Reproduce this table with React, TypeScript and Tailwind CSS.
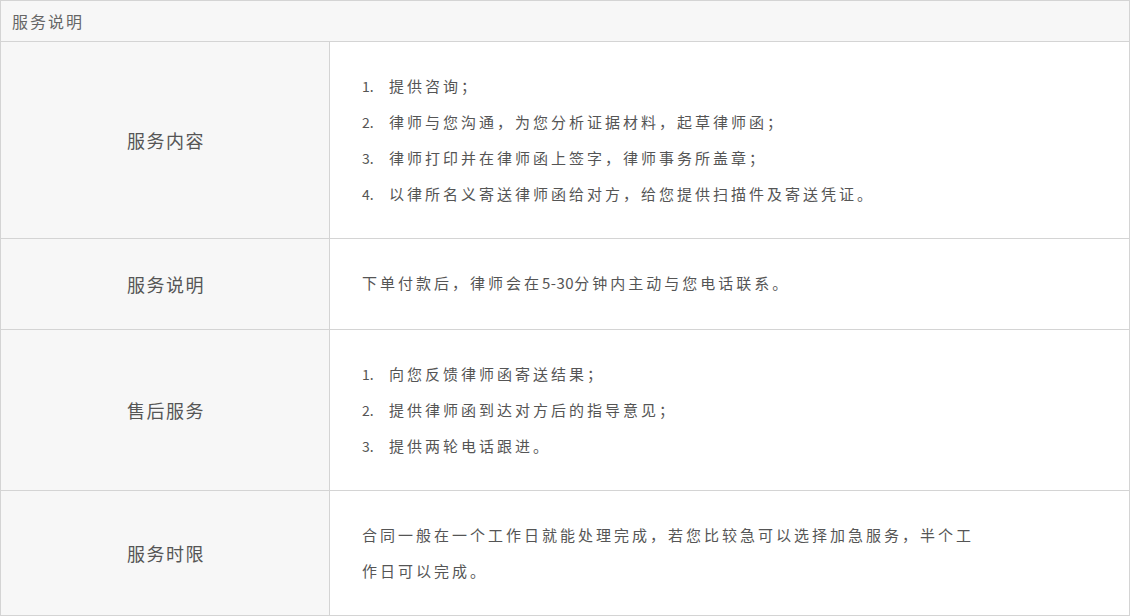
const rows: { label: string; items?: string[]; text?: React.ReactNode; pad: string }[] = [
  {
    label: '服务内容',
    pad: 'pt-[26px] pb-[26px]',
    items: [
      '提供咨询；',
      '律师与您沟通，为您分析证据材料，起草律师函；',
      '律师打印并在律师函上签字，律师事务所盖章；',
      '以律所名义寄送律师函给对方，给您提供扫描件及寄送凭证。',
    ],
  },
  {
    label: '服务说明',
    pad: 'pt-[26px] pb-[28px]',
    text: (
      <>
        下单付款后，律师会在<span className="tracking-[0.5px]">5-30</span>分钟内主动与您电话联系。
      </>
    ),
  },
  {
    label: '售后服务',
    pad: 'pt-[26px] pb-[26px]',
    items: ['向您反馈律师函寄送结果；', '提供律师函到达对方后的指导意见；', '提供两轮电话跟进。'],
  },
  {
    label: '服务时限',
    pad: 'pt-[26px] pb-[26px]',
    text: '合同一般在一个工作日就能处理完成，若您比较急可以选择加急服务，半个工作日可以完成。',
  },
];

const App = () => {
  return (
    <div
      className="w-[1130px] h-[616px] bg-white"
      style={{ fontFamily: '"Noto Sans CJK SC", "Noto Sans", sans-serif' }}
    >
      <div className="border border-[#d4d4d4]">
        {/* Header */}
        <div className="h-[41px] bg-[#f7f7f7] border-b border-[#d4d4d4] flex items-center pl-[11px]">
          <span className="text-[16px] tracking-[2px] text-[#666]">服务说明</span>
        </div>

        {rows.map((row, i) => (
          <div
            key={row.label}
            className={`flex ${i < rows.length - 1 ? 'border-b border-[#d4d4d4]' : ''}`}
          >
            <div className="w-[329px] shrink-0 bg-[#f7f7f7] border-r border-[#d4d4d4] flex items-center justify-center">
              <span className="text-[18px] tracking-[1.5px] text-[#555] pl-[2px]">{row.label}</span>
            </div>
            <div className={`flex-1 pl-[32px] ${row.pad}`}>
              {row.items ? (
                <ol>
                  {row.items.map((item, n) => (
                    <li key={n} className="flex items-baseline leading-[36px] text-[15px] text-[#555]">
                      <span className="w-[27px] shrink-0 text-[14px]">{n + 1}.</span>
                      <span className="tracking-[3px]">{item}</span>
                    </li>
                  ))}
                </ol>
              ) : (
                <p className="w-[620px] text-[15px] leading-[36px] tracking-[3px] text-[#555]">{row.text}</p>
              )}
            </div>
          </div>
        ))}
      </div>
    </div>
  );
};

export default App;
